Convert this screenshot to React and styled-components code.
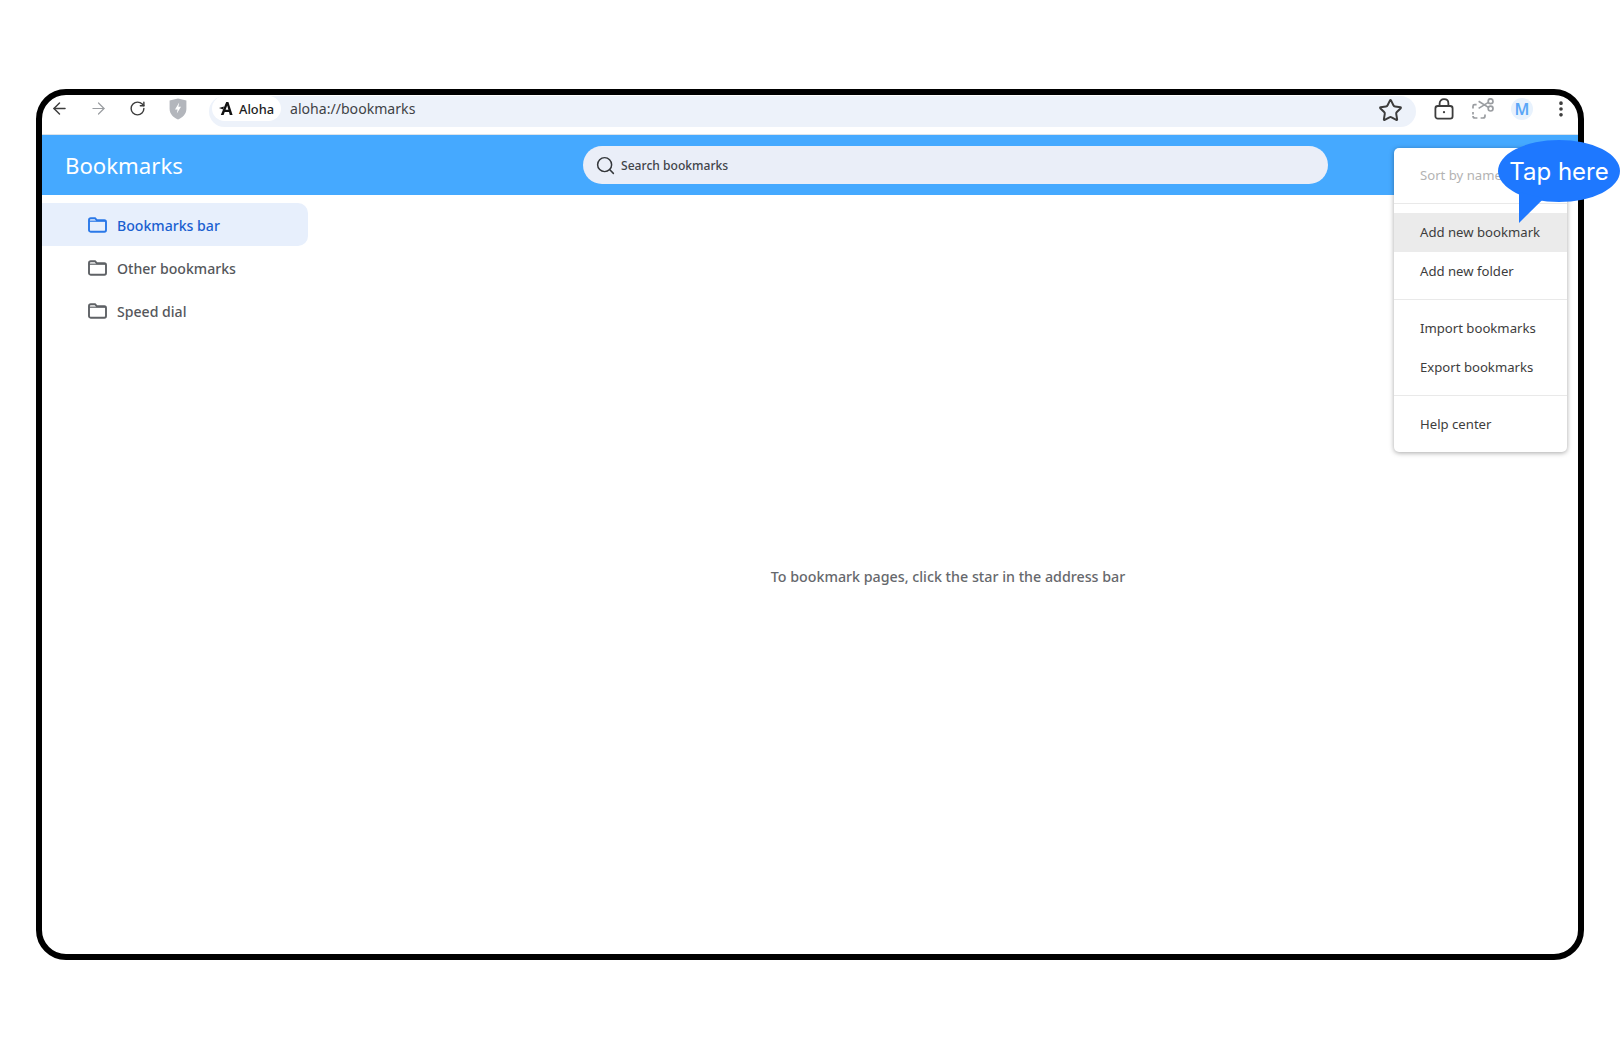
import React from 'react';
import styled, { createGlobalStyle } from 'styled-components';
import { ArrowLeft, ArrowRight, RotateCw, Star, Search, EllipsisVertical } from 'lucide-react';

const GlobalStyle = createGlobalStyle`
  html, body {
    margin: 0;
    padding: 0;
    background: #fff;
    font-family: "Noto Sans", "Liberation Sans", sans-serif;
  }
`;

const S = {
  Page: styled.div`
    width: 1621px;
    height: 1048px;
    padding: 89px 0 0 36px;
    box-sizing: border-box;
    overflow: hidden;
  `,
  Frame: styled.div`
    position: relative;
    width: 1548px;
    height: 871px;
    box-sizing: border-box;
    border: 6px solid #000;
    border-radius: 30px;
    background: #fff;
    display: flex;
    flex-direction: column;
  `,
  Toolbar: styled.div`
    height: 40px;
    flex: none;
    box-sizing: border-box;
    padding-bottom: 12px;
    display: flex;
    align-items: center;
    gap: 5px;
    border-bottom: 1px solid #dbe3ea;
    border-radius: 24px 24px 0 0;
  `,
  ToolSlot: styled.div`
    width: 34px;
    flex: none;
    display: flex;
    justify-content: center;
    align-items: center;
    color: ${props => props.$color || '#3c3c3c'};
    margin-left: ${props => props.$offset || 0}px;
  `,
  AddressBar: styled.div`
    flex: 1;
    height: 31px;
    margin: 1px 6px 0 9px;
    padding: 0 13px 0 3px;
    border-radius: 16px;
    background: #edf2fa;
    display: flex;
    align-items: center;
    gap: 9px;
    align-self: flex-start;
  `,
  Chip: styled.div`
    width: 69px;
    height: 25px;
    box-sizing: border-box;
    margin-top: -6px;
    padding-left: 7px;
    border-radius: 13px;
    background: #fff;
    display: flex;
    align-items: center;
    gap: 6px;
    font-size: 12.8px;
    font-weight: 500;
    color: #1c1c1c;
  `,
  Url: styled.span`
    flex: 1;
    margin-top: -6px;
    font-size: 14.1px;
    color: #3f4246;
  `,
  Avatar: styled.div`
    width: 22px;
    height: 22px;
    border-radius: 50%;
    background: #e8f2fd;
    color: #5aa6f7;
    font-size: 16px;
    font-weight: 600;
    display: flex;
    align-items: center;
    justify-content: center;
  `,
  Header: styled.header`
    height: 60px;
    flex: none;
    box-sizing: border-box;
    padding-left: 23px;
    background: #45a9ff;
    display: flex;
    align-items: center;
  `,
  Title: styled.h1`
    width: 518px;
    flex: none;
    margin: 0;
    font-size: 22.2px;
    font-weight: 400;
    color: #fff;
  `,
  SearchBox: styled.div`
    width: 745px;
    height: 38px;
    margin-top: -1px;
    box-sizing: border-box;
    padding: 2px 0 0 12px;
    border-radius: 19px;
    background: #eaeef8;
    display: flex;
    align-items: center;
    gap: 5px;
    font-size: 12.1px;
    font-weight: 500;
    color: #41444a;
  `,
  Body: styled.div`
    flex: 1;
    display: flex;
    min-height: 0;
  `,
  Sidebar: styled.nav`
    width: 266px;
    flex: none;
    padding-top: 8px;
    display: flex;
    flex-direction: column;
  `,
  FolderRow: styled.div`
    height: 43px;
    padding-left: 46px;
    display: flex;
    align-items: center;
    gap: 10px;
    border-radius: 0 10px 10px 0;
    font-size: 14.1px;
    font-weight: 500;
    background: ${props => (props.$active ? '#e7effc' : 'transparent')};
    color: ${props => (props.$active ? '#1a5fd0' : '#55575b')};
  `,
  FolderLabel: styled.span`
    margin-top: 2px;
  `,
  Main: styled.main`
    flex: 1;
    padding: 4px 0 0 10px;
    display: flex;
    align-items: center;
    justify-content: center;
    font-size: 14.25px;
    font-weight: 500;
    color: #66686c;
  `,
  Menu: styled.div`
    position: absolute;
    left: 1352px;
    top: 53px;
    width: 173px;
    height: 304px;
    border-radius: 5px;
    background: #fff;
    box-shadow: 0 1px 5px rgba(0, 0, 0, 0.35);
    display: flex;
    flex-direction: column;
  `,
  MenuGroup: styled.div`
    padding: 8px 0 8px;
    border-bottom: 1px solid #e9e9e9;
    &:last-child { border-bottom: 0; }
    &:not(:first-child) { padding-top: 9px; }
  `,
  MenuItem: styled.div`
    height: 39px;
    box-sizing: border-box;
    padding: 0 0 1px 26px;
    display: flex;
    align-items: center;
    font-size: 13.15px;
    white-space: nowrap;
    background: ${props => (props.$hover ? '#ebebeb' : 'transparent')};
    color: ${props => (props.$disabled ? '#b3b3b3' : '#3d3d3d')};
  `,
  Bubble: styled.div`
    position: absolute;
    left: 1456px;
    top: 45px;
    width: 122px;
    height: 62px;
    border-radius: 50%;
    background: #1e78ff;
    color: #fff;
    font-family: Inter, "Noto Sans", sans-serif;
    font-size: 24px;
    font-weight: 400;
    white-space: nowrap;
    display: flex;
    align-items: center;
    justify-content: center;
    &::after {
      content: '';
      position: absolute;
      left: 21px;
      top: 52px;
      width: 25px;
      height: 31px;
      background: #1e78ff;
      clip-path: polygon(0 0, 100% 20%, 0 100%);
    }
  `,
};

const FolderIcon = ({ color }) => (
  <svg width="19" height="16" viewBox="0 0 19 16" fill="none" stroke={color} strokeWidth="1.9">
    <path d="M1 3 C1 1.8 1.6 1.2 2.8 1.2 H7 L8.8 3.2 H16.4 C17.4 3.2 18 3.9 18 4.9 V13 C18 14 17.4 14.7 16.4 14.7 H2.6 C1.6 14.7 1 14 1 13 Z" />
    <path d="M1 4.2 H18" strokeWidth="1.2" />
  </svg>
);

const ShieldIcon = () => (
  <svg width="18" height="22" viewBox="0 0 18 22">
    <path d="M9 .6 L17.4 2.6 V11 C17.4 16 13.4 19.6 9 21.4 C4.6 19.6 .6 16 .6 11 V2.6 Z" fill="#b3b6bc" />
    <path d="M10.2 4.6 L6 11.4 H8.6 L7.8 15.6 L12 8.8 H9.4 Z" fill="#fff" />
  </svg>
);

const LogoIcon = () => (
  <svg width="14" height="13" viewBox="0 0 14 13" fill="#111">
    <path d="M7.2 0 H9.4 L13.6 13 H10.8 L10 10 H5.6 L6.3 7.8 H9.4 L8.2 3.6 L4.6 13 H1.8 Z" />
    <path d="M0 6 L5 4.6 L4.2 7.4 Z" />
  </svg>
);

const LockIcon = () => (
  <svg width="20" height="22" viewBox="0 0 20 22" fill="none" stroke="#3c3c3c" strokeWidth="1.8">
    <rect x="1.4" y="8" width="17.2" height="12.6" rx="2.4" />
    <path d="M5.6 8 V5.4 C5.6 2.8 7.5 1.2 10 1.2 C12.5 1.2 14.4 2.8 14.4 5.4 V8" />
    <circle cx="10" cy="14.2" r="1.1" fill="#3c3c3c" stroke="none" />
  </svg>
);

const CaptureIcon = () => (
  <svg width="22" height="21" viewBox="0 0 22 21" fill="none" stroke="#9a9da1" strokeWidth="1.7">
    <path d="M1 10.5 V8.2 C1 7.2 1.6 6.6 2.6 6.6 H4.6" />
    <path d="M1 14 V16.4" />
    <path d="M1 18 C1 19.4 1.8 20 3 20 H5.4" />
    <path d="M8.6 20 H11 C12.2 20 13 19.2 13 18 V16.6" />
    <circle cx="18.6" cy="3.2" r="2.4" />
    <circle cx="18.6" cy="10.6" r="2.4" />
    <path d="M16.4 4.4 L6.6 10.4 M16.4 9.4 L6.6 3.2" />
  </svg>
);

const FOLDERS = [
  { label: 'Bookmarks bar', active: true },
  { label: 'Other bookmarks' },
  { label: 'Speed dial' },
];

const MENU_GROUPS = [
  [{ label: 'Sort by name', disabled: true }],
  [{ label: 'Add new bookmark', hover: true }, { label: 'Add new folder' }],
  [{ label: 'Import bookmarks' }, { label: 'Export bookmarks' }],
  [{ label: 'Help center' }],
];

const App = () => (
  <S.Page>
    <GlobalStyle />
    <S.Frame>
      <S.Toolbar>
        <S.ToolSlot><ArrowLeft size={19} strokeWidth={1.8} /></S.ToolSlot>
        <S.ToolSlot $color="#9a9da1"><ArrowRight size={19} strokeWidth={1.5} /></S.ToolSlot>
        <S.ToolSlot><RotateCw size={17} strokeWidth={2} /></S.ToolSlot>
        <S.ToolSlot $offset={2}><ShieldIcon /></S.ToolSlot>
        <S.AddressBar>
          <S.Chip><LogoIcon />Aloha</S.Chip>
          <S.Url>aloha://bookmarks</S.Url>
          <Star size={25} strokeWidth={1.9} color="#3c3c3c" style={{ marginTop: -3 }} />
        </S.AddressBar>
        <S.ToolSlot><LockIcon /></S.ToolSlot>
        <S.ToolSlot><CaptureIcon /></S.ToolSlot>
        <S.ToolSlot><S.Avatar>M</S.Avatar></S.ToolSlot>
        <S.ToolSlot><EllipsisVertical size={20} strokeWidth={2.4} /></S.ToolSlot>
      </S.Toolbar>
      <S.Header>
        <S.Title>Bookmarks</S.Title>
        <S.SearchBox><Search size={21} strokeWidth={1.7} color="#33363a" />Search bookmarks</S.SearchBox>
      </S.Header>
      <S.Body>
        <S.Sidebar>
          {FOLDERS.map(folder => (
            <S.FolderRow key={folder.label} $active={folder.active}>
              <FolderIcon color={folder.active ? '#2a78e8' : '#5f6266'} />
              <S.FolderLabel>{folder.label}</S.FolderLabel>
            </S.FolderRow>
          ))}
        </S.Sidebar>
        <S.Main>To bookmark pages, click the star in the address bar</S.Main>
      </S.Body>
      <S.Menu>
        {MENU_GROUPS.map((group, index) => (
          <S.MenuGroup key={index}>
            {group.map(item => (
              <S.MenuItem key={item.label} $hover={item.hover} $disabled={item.disabled}>{item.label}</S.MenuItem>
            ))}
          </S.MenuGroup>
        ))}
      </S.Menu>
      <S.Bubble>Tap here</S.Bubble>
    </S.Frame>
  </S.Page>
);

export default App;
